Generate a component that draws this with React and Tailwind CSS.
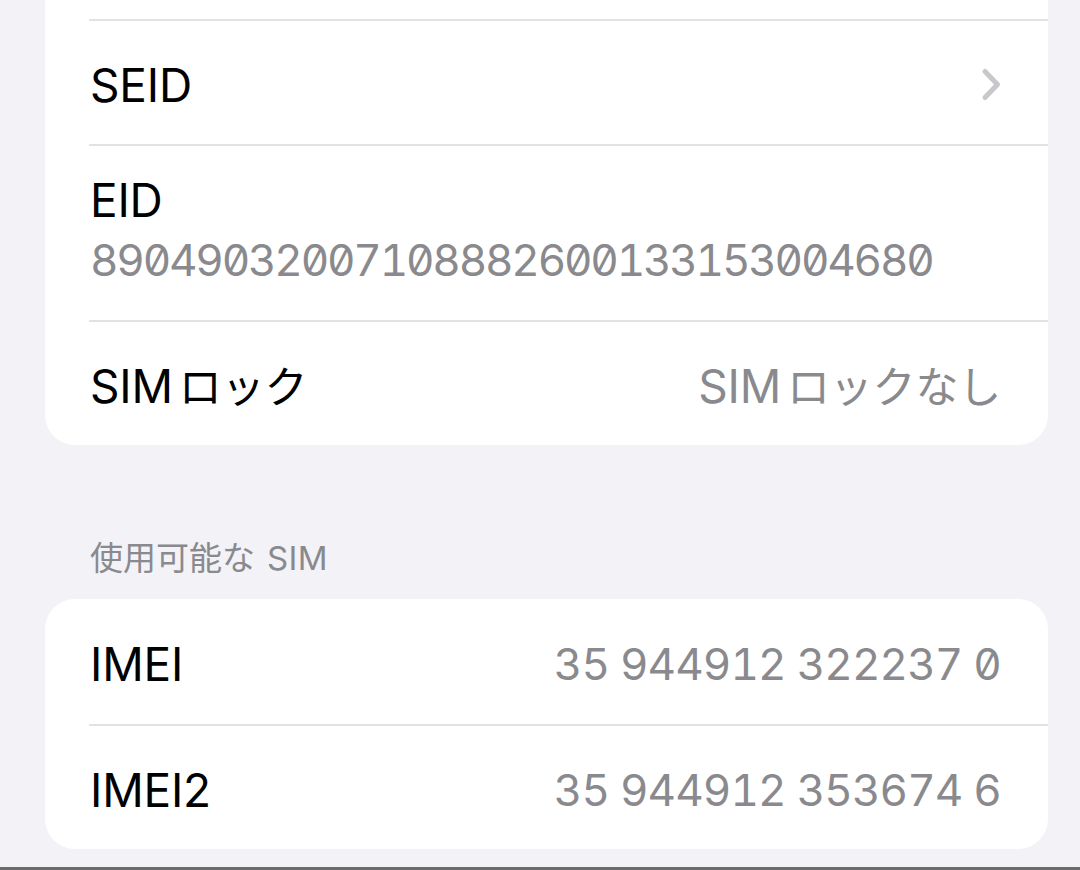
import React from "react";

const font = "font-['Inter','Noto_Sans_CJK_JP',sans-serif]";

function Chevron() {
  return (
    <svg width="24" height="36" viewBox="0 0 24 36" fill="none" className="mr-[-2px]">
      <path
        d="M6 4.5 L18.5 17.5 L6 30.5"
        stroke="#c7c7cc"
        strokeWidth="5"
        strokeLinecap="round"
        strokeLinejoin="round"
      />
    </svg>
  );
}

function SimText({ rest, size }) {
  return (
    <>
      <span>SIM</span>
      <span className={"ml-[6px] " + size}>{rest}</span>
    </>
  );
}

function Row({ label, value, chevron, top }) {
  return (
    <div className="pl-[44px]">
      <div
        className={
          "h-[125px] pt-[5px] pl-[1px] pr-[47px] flex items-center justify-between " +
          (top ? "" : "border-t-[2px] border-[#e2e2e5]")
        }
      >
        <span className="text-[46px] leading-[56px] text-black tracking-[-0.2px]">{label}</span>
        {value && (
          <span className="text-[44px] leading-[56px] text-[#8a8a8e] tabular-nums slashed-zero tracking-[-0.9px]">
            {value}
          </span>
        )}
        {chevron && <Chevron />}
      </div>
    </div>
  );
}

export default function App() {
  return (
    <div className={"w-[1080px] h-[870px] overflow-hidden bg-[#f2f2f7] flex flex-col " + font}>
      {/* first group, scrolled past its top */}
      <div className="mx-[45px] w-[1003px] bg-white rounded-b-[30px]">
        <div className="h-[19px]" />
        <Row label="SEID" chevron />
        <div className="pl-[44px]">
          <div className="h-[176px] pl-[1px] pt-[26px] border-t-[2px] border-[#e2e2e5] flex flex-col">
            <span className="text-[46px] leading-[56px] text-black tracking-[-0.2px]">EID</span>
            <span className="mt-[4px] text-[44px] leading-[56px] text-[#8a8a8e] tabular-nums slashed-zero tracking-[-2.2px]">
              89049032007108882600133153004680
            </span>
          </div>
        </div>
        <div className="pl-[44px]">
          <div className="h-[125px] pt-[5px] pl-[1px] pr-[47px] flex items-center justify-between border-t-[2px] border-[#e2e2e5]">
            <span className="text-[46px] leading-[56px] text-black tracking-[-0.2px]">
              <SimText rest="ロック" size="text-[43px]" />
            </span>
            <span className="text-[46px] leading-[56px] text-[#8a8a8e] tracking-[-0.2px]">
              <SimText rest="ロックなし" size="text-[43px]" />
            </span>
          </div>
        </div>
      </div>

      {/* section header */}
      <div className="pt-[93px] pb-[21px] pl-[90px]">
        <div className="text-[33px] leading-[40px] text-[#8a8a8e]">
          <span>使用可能な</span>
          <span className="ml-[12px] tracking-[0.3px]">SIM</span>
        </div>
      </div>

      {/* available SIM group */}
      <div className="mx-[45px] w-[1003px] bg-white rounded-[30px] overflow-hidden">
        <Row label="IMEI" value="35 944912 322237 0" top />
        <Row label="IMEI2" value="35 944912 353674 6" />
      </div>

      <div className="flex-1" />
      <div className="h-[3px] bg-[#6b6b6e]" />
    </div>
  );
}
